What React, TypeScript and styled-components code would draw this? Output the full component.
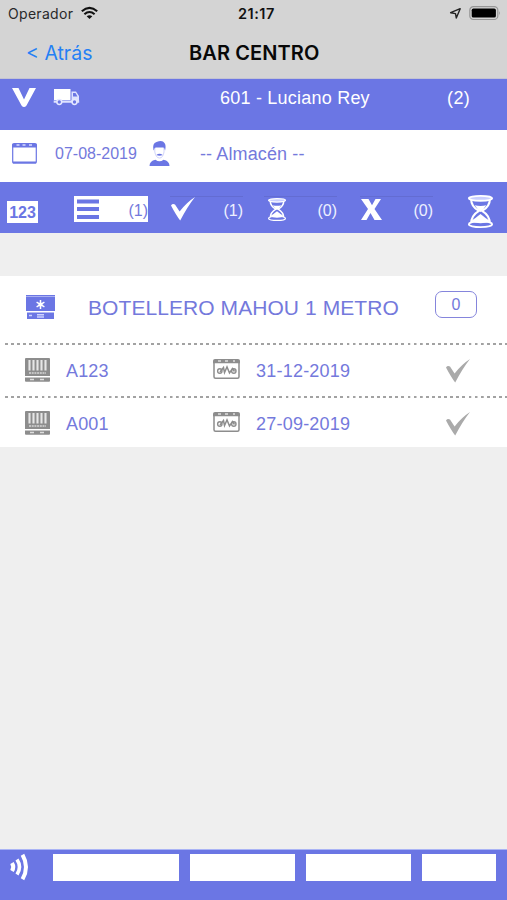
import React from "react";
import styled, { createGlobalStyle } from "styled-components";

const blue = "#6b76e4";
const grey = "#8d8d8d";

const Global = createGlobalStyle`
  * { box-sizing: border-box; }
  body { margin: 0; background: #efefef; }
  svg { display: block; flex: none; }
`;

const Screen = styled.div`
  display: flex;
  flex-direction: column;
  width: 507px;
  height: 900px;
  overflow: hidden;
  background: #efefef;
  font-family: "Liberation Sans", Arial, sans-serif;
`;

const Header = styled.header`
  height: 79px;
  background: #d4d4d4;
  font-family: Inter, "Liberation Sans", sans-serif;
  border-bottom: 1px solid #c3c3d4;
`;

const StatusBar = styled.div`
  display: grid;
  grid-template-columns: 73px 157px 212px 19px 1fr;
  padding: 4px 0 0 8px;
  height: 27px;
`;

const NavBar = styled.div`
  display: grid;
  grid-template-columns: 163px 1fr;
  padding: 15px 0 0 26px;
`;

const Text = styled.span<{ $size: number; $top?: number; $color?: string; $weight?: number; $track?: number }>`
  display: block;
  height: 20px;
  line-height: 20px;
  white-space: nowrap;
  font-size: ${(p) => p.$size}px;
  margin-top: ${(p) => p.$top ?? 0}px;
  color: ${(p) => p.$color ?? "#7479dc"};
  font-weight: ${(p) => p.$weight ?? 400};
  letter-spacing: ${(p) => p.$track ?? 0}px;
`;

const Icon = styled.svg<{ $top?: number }>`
  margin-top: ${(p) => p.$top ?? 0}px;
  overflow: visible;
`;

const RouteBar = styled.section`
  display: grid;
  grid-template-columns: 41px 167px 227px 1fr;
  height: 51px;
  padding-left: 12px;
  background: ${blue};
`;

const DateBar = styled.section`
  display: grid;
  grid-template-columns: 43px 94px 51px 1fr;
  height: 52px;
  padding-left: 12px;
  background: #fff;
`;

const FilterBar = styled.section`
  display: grid;
  grid-template-columns: 67px 96px 94px 96px 108px 1fr;
  height: 51px;
  padding: 14px 0 0 7px;
  background: ${blue};
`;

const Numbers = styled.div`
  width: 31px;
  height: 22px;
  margin-top: 5px;
  background: #fff;
  color: ${blue};
  font-size: 16px;
  font-weight: 700;
  line-height: 24px;
  text-align: center;
`;

const Filter = styled.div<{ $active?: boolean }>`
  display: flex;
  justify-content: space-between;
  width: ${(p) => (p.$active ? 74 : 73)}px;
  height: 26px;
  padding-left: ${(p) => (p.$active ? 3 : 1)}px;
  background: ${(p) => (p.$active ? "#fff" : "transparent")};
  border-top: 1px solid ${(p) => (p.$active ? "#fff" : "#636cd2")};
`;

const Card = styled.main`
  height: 171px;
  margin-top: 43px;
  background: #fff;
`;

const CardHead = styled.div`
  display: grid;
  grid-template-columns: 62px 347px 42px;
  height: 67px;
  padding-left: 26px;
`;

const Badge = styled.div`
  height: 27px;
  margin-top: 15px;
  border: 1.5px solid #8585dc;
  border-radius: 7px;
  color: #7479dc;
  font-size: 16px;
  line-height: 25px;
  text-align: center;
`;

const AssetRow = styled.div`
  display: grid;
  grid-template-columns: 41px 147px 43px 190px 1fr;
  height: 53px;
  padding-left: 25px;
  background: repeating-linear-gradient(90deg, #a2a2a2 0 2.6px, transparent 3px 6.1px) 5px 0 / 100% 2px no-repeat;
`;

const Footer = styled.footer`
  display: grid;
  grid-template-columns: 32px 126px 105px 105px 74px;
  column-gap: 11px;
  height: 51px;
  margin-top: auto;
  padding: 4px 0 0 10px;
  background: ${blue};
  border-top: 1px solid #aab4f5;
`;

const Field = styled.div`
  height: 27px;
  background: #fff;
`;

function Calendar() {
  return (
    <Icon $top={13} width="25" height="21" viewBox="0 0 25 21">
      <rect x=".7" y="2" width="23.6" height="18" rx="1" fill="none" stroke={blue} strokeWidth="1.2" />
      <path d="M0 4.5V1.5Q0 0 2 0h21q2 0 2 1.5v3Z M1 18.5h23v2H1Z" fill={blue} />
      <path d="M4.5 2h3M10.5 2h3M17 2h3" stroke="#d6daff" strokeWidth="1.5" />
    </Icon>
  );
}

function Tick({ color, top }: { color: string; top: number }) {
  return (
    <Icon $top={top} width="24" height="24" viewBox="0 0 24 24">
      <path d="M0 8.5Q1.500 6.200 4 7.500l4.600 7Q15.500 5.500 24 0 16.500 9.500 9.200 23.600Q5 18 0 8.500" fill={color} />
    </Icon>
  );
}

function Hourglass({ width, height, top, indent = 0 }: { width: number; height: number; top: number; indent?: number }) {
  const unit = 24 / width;
  return (
    <Icon
      $top={top}
      width={width + indent}
      height={height}
      viewBox={`${-indent * unit} 0 ${24 + indent * unit} 32`}
      preserveAspectRatio="none"
    >
      <path d="M3 4Q3 11 10.5 15.5 3 20 3 28h18q0-8-7.5-12.5Q21 11 21 4" fill="none" stroke="#fff" strokeWidth="2" />
      <path d="M6.500 10q5.500 1.500 11 0-2 3.500-5.500 6.500-3.500-3-5.500-6.500" fill="#fff" />
      <ellipse cx="12" cy="28.400" rx="11.200" ry="2.800" fill={blue} stroke="#fff" strokeWidth="1.700" />
      <path d="M2.500 25.500Q8 22 12 18.500q4 3.500 9.500 7-9.500 4-19 0" fill="#fff" />
      <ellipse cx="12" cy="3.200" rx="11.200" ry="2.400" fill="#c9ceff" stroke="#fff" strokeWidth="1.800" />
    </Icon>
  );
}

function Barcode() {
  return (
    <Icon $top={15} width="25" height="24" viewBox="0 0 25 24">
      <path d="M1 0h23q1 0 1 1v17H0V1q0-1 1-1" fill={grey} />
      <path d="M4.500 2v10.500M8.500 2v10.500M12.500 2v10.500M16.500 2v10.500M20.500 2v10.500" stroke="#e6e6e6" strokeWidth="2.100" />
      <path d="M4 15h17" stroke="#c4c4c4" strokeWidth="2" strokeDasharray="2 .7" />
      <path d="M0 19.500h25V23q0 .700-1 .700H1q-1 0-1-.700Z" fill={grey} />
      <path d="M5 21.500h4M15 21.500h4" stroke="#ddd" strokeWidth="1.500" />
    </Icon>
  );
}

function ServiceDate() {
  return (
    <Icon $top={16} width="27" height="20" viewBox="0 0 27 20">
      <rect x="1" y="1.500" width="25" height="17.700" rx="1.500" fill="#fff" stroke={grey} strokeWidth="1.500" />
      <path d="M0 4V2q0-2 2-2h23q2 0 2 2v2.300H0Z" fill={grey} />
      <path d="M5 2h3M12 2h3M20 2h2" stroke="#ddd" strokeWidth="1.400" />
      <path d="m7 13 3.500-4.500 1 5L14 8l2.500 6 3-4.500 2 3" fill="none" stroke={grey} strokeWidth="1.500" />
      <circle cx="6.800" cy="12" r="2.200" fill="none" stroke={grey} strokeWidth="1.400" />
      <circle cx="20.800" cy="12" r="2.200" fill="none" stroke={grey} strokeWidth="1.400" />
    </Icon>
  );
}

const assets = [
  { code: "A123", date: "31-12-2019" },
  { code: "A001", date: "27-09-2019" },
];

export default function App() {
  return (
    <>
      <Global />
      <Screen>
        <Header>
          <StatusBar>
            <Text $size={14} $color="#292929" $track={0.3}>Operador</Text>
            <Icon $top={3} width="17" height="12" viewBox="0 0 17 12">
              <path d="M.800 4.200Q8.500-2.400 16.200 4.200M3.400 7.200Q8.500 2.800 13.600 7.200" fill="none" stroke="#111" strokeWidth="2.100" />
              <path d="M5.700 9.300Q8.500 7 11.300 9.300L8.500 12Z" fill="#111" />
            </Icon>
            <Text $size={14.5} $color="#111" $weight={600} $track={0.5}>21:17</Text>
            <Icon $top={4} width="11" height="11" viewBox="0 0 11 11">
              <path d="M.6 4.700 10.200.7 6.300 10 5.500 5.600Z" fill="none" stroke="#222" strokeWidth="1.400" strokeLinejoin="round" />
            </Icon>
            <Icon $top={2} width="32" height="14" viewBox="0 0 32 14">
              <rect x=".8" y=".7" width="28" height="12.800" rx="3.600" fill="none" stroke="#969696" strokeWidth="1.200" />
              <rect x="2.700" y="2.600" width="24.200" height="9" rx="1.700" fill="#000" />
              <path d="M30 5q1.800 2.100 0 4.200Z" fill="#969696" />
            </Icon>
          </StatusBar>
          <NavBar>
            <Text $size={19.5} $top={1} $color="#2480f5">&lt; Atrás</Text>
            <Text $size={20} $top={1} $color="#080808" $weight={600} $track={0.1}>BAR CENTRO</Text>
          </NavBar>
        </Header>
        <RouteBar>
          <Icon $top={9} width="24" height="20" viewBox="0 0 24 20">
            <path d="M0 0h6.500L12 11.500 17.500 0H24L14.500 17.500Q12 20.500 9.500 17.500Z" fill="#fff" />
          </Icon>
          <Icon $top={10} width="27" height="16" viewBox="0 0 27 16">
            <path d="M1 0h16.500v11H1Z" fill="#fff" />
            <path d="M18.500 2.500h4.500L26 7v6h-7.500ZM.7 11.500h25.500v2.200H.7Z" fill="#dfe3ff" />
            <path d="M20 4h2.500l2 3.500H20Z" fill={blue} />
            <circle cx="6.300" cy="13" r="2.400" fill={blue} stroke="#e5e8ff" strokeWidth="1.500" />
            <circle cx="21.500" cy="13" r="2.400" fill={blue} stroke="#e5e8ff" strokeWidth="1.500" />
          </Icon>
          <Text $size={18} $top={9} $color="#fff" $track={0.22}>601 - Luciano Rey</Text>
          <Text $size={18} $top={9} $color="#fff" $track={0.4}>(2)</Text>
        </RouteBar>
        <DateBar>
          <Calendar />
          <Text $size={16} $top={14}>07-08-2019</Text>
          <Icon $top={11} width="21" height="25" viewBox="0 0 20 25">
            <path d="M4 9.500Q2.500 2 7 1q6-2.300 8 1 1.800 2 .6 7.500L14 6.500H6Z" fill={blue} />
            <path d="M5.300 7v4Q6.500 17 10 17t4.500-6V7" fill="none" stroke="#c5c9f7" strokeWidth=".8" />
            <path d="M6.800 14q3.200-2.600 6.400 0-3.200 1.600-6.400 0" fill={blue} />
            <path d="M0 25q0-5 6-6.200 4 3 8 0 6 1.200 6 6.200Z" fill={blue} />
          </Icon>
          <Text $size={18} $top={14} $track={0.12}>-- Almacén --</Text>
        </DateBar>
        <FilterBar>
          <Numbers>123</Numbers>
          <Filter $active>
            <Icon $top={1} width="22" height="22" viewBox="0 0 22 22">
              <path d="M0 3.500h22M0 11h22M0 19h22" stroke={blue} strokeWidth="4" />
            </Icon>
            <Text $size={16} $top={4}>(1)</Text>
          </Filter>
          <Filter>
            <Tick color="#fff" top={0} />
            <Text $size={16} $top={4} $color="#eef0ff">(1)</Text>
          </Filter>
          <Filter>
            <Hourglass width={18} height={23} top={1} indent={3} />
            <Text $size={16} $top={4} $color="#eef0ff">(0)</Text>
          </Filter>
          <Filter>
            <Icon $top={2} width="21" height="21" viewBox="0 0 21 21">
              <path d="M0 0h7.500l3.500 6.200L14.500 0H20L13.500 10 21 21h-7.500l-4-7-4 7H0L7 10Z" fill="#fff" />
            </Icon>
            <Text $size={16} $top={4} $color="#eef0ff">(0)</Text>
          </Filter>
          <Hourglass width={25} height={33} top={-1} />
        </FilterBar>
        <Card>
          <CardHead>
            <Icon $top={19} width="29" height="24" viewBox="0 0 29 24">
              <path d="M0 0h29v16H0Z M1 17.500h27V24H1Z" fill={blue} />
              <path d="M0 1.500h29" stroke="#a9b0f2" strokeWidth="1" />
              <path d="M14.500 5v9M10.600 7.200l7.800 4.600M10.600 11.800l7.800-4.600" stroke="#fff" strokeWidth="1.500" />
              <circle cx="14.500" cy="9.500" r="2" fill="#fff" />
              <path d="M3 20.500h3M11 19.800h7M11 22h7" stroke="#cdd2ff" strokeWidth="1.500" />
            </Icon>
            <Text $size={21} $top={22} $track={0.07}>BOTELLERO MAHOU 1 METRO</Text>
            <Badge>0</Badge>
          </CardHead>
          {assets.map((a) => (
            <AssetRow key={a.code}>
              <Barcode />
              <Text $size={18} $top={18} $track={0.15}>{a.code}</Text>
              <ServiceDate />
              <Text $size={18} $top={18} $track={0.22}>{a.date}</Text>
              <Tick color="#aaa" top={16} />
            </AssetRow>
          ))}
        </Card>
        <Footer>
          <Icon width="20" height="26" viewBox="0 0 20 26">
            <path d="M2 9q2.500 4 0 8" fill="none" stroke="#fff" strokeWidth="4" />
            <path d="M7 5.500q5 7.500 0 15" fill="none" stroke="#fff" strokeWidth="3.600" />
            <path d="M12.500.7q7 12.300 0 24.600" fill="none" stroke="#fff" strokeWidth="4" />
          </Icon>
          <Field />
          <Field />
          <Field />
          <Field />
        </Footer>
      </Screen>
    </>
  );
}
